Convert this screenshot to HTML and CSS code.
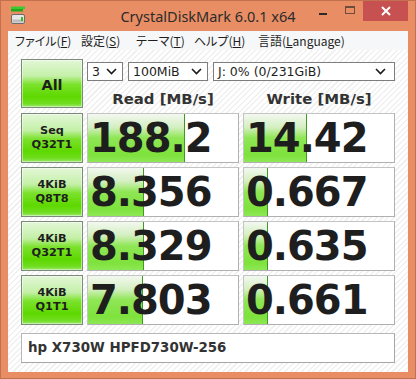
FILE: index.html
```html
<!DOCTYPE html>
<html lang="ja">
<head>
<meta charset="utf-8">
<title>CrystalDiskMark 6.0.1 x64</title>
<link rel="stylesheet" href="styles.css">
</head>
<body>
<div class="window">
  <div class="titlebar">
    <div class="tb-left">
      <svg class="appicon" width="16" height="18" viewBox="0 0 16 18">
        <rect x="1" y="0.5" width="14" height="2.5" fill="#3cc832"/>
        <rect x="1" y="3" width="12" height="2.5" fill="#22a81c"/>
        <rect x="1.5" y="8.5" width="13" height="9" rx="1.5" fill="#e6e6e6" stroke="#6c6c6c"/>
        <rect x="2.5" y="13.5" width="11" height="3" fill="#bdbdbd"/>
        <rect x="11" y="11" width="2" height="4" fill="#2fbf2a"/>
      </svg>
    </div>
    <div class="title">CrystalDiskMark 6.0.1 x64</div>
    <div class="controls">
      <span class="ctl"><span class="min-dash"></span></span>
      <span class="ctl"><span class="max-box"></span></span>
      <span class="ctl close">
        <svg width="10" height="10" viewBox="0 0 10 10"><path d="M1 1 L9 9 M9 1 L1 9" stroke="#fff" stroke-width="2"/></svg>
      </span>
    </div>
  </div>
  <div class="client">
    <div class="menubar">
      <span class="mi m1">ファイル(<u>F</u>)</span>
      <span class="mi m2">設定(<u>S</u>)</span>
      <span class="mi m3">テーマ(<u>T</u>)</span>
      <span class="mi m4">ヘルプ(<u>H</u>)</span>
      <span class="mi m5">言語(<u>L</u>anguage)</span>
    </div>
    <div class="content">
      <div class="top">
        <div class="gbtn all">All</div>
        <div class="topright">
          <div class="combos">
            <div class="combo c-count"><span>3</span><svg class="chev" width="11" height="7" viewBox="0 0 11 7"><path d="M1 1 L5.5 5.5 L10 1" fill="none" stroke="#1a1a1a" stroke-width="1.6"/></svg></div>
            <div class="combo c-size"><span>100MiB</span><svg class="chev" width="11" height="7" viewBox="0 0 11 7"><path d="M1 1 L5.5 5.5 L10 1" fill="none" stroke="#1a1a1a" stroke-width="1.6"/></svg></div>
            <div class="combo c-drive"><span>J: 0% (0/231GiB)</span><svg class="chev" width="11" height="7" viewBox="0 0 11 7"><path d="M1 1 L5.5 5.5 L10 1" fill="none" stroke="#1a1a1a" stroke-width="1.6"/></svg></div>
          </div>
          <div class="heads">
            <div class="head">Read [MB/s]</div>
            <div class="head">Write [MB/s]</div>
          </div>
        </div>
      </div>
      <div class="rows">
        <div class="row">
          <div class="gbtn label">Seq<br>Q32T1</div>
          <div class="val" style="--w:97px">188.2</div>
          <div class="val" style="--w:63px">14.42</div>
        </div>
        <div class="row">
          <div class="gbtn label">4KiB<br>Q8T8</div>
          <div class="val" style="--w:56px">8.356</div>
          <div class="val" style="--w:24px">0.667</div>
        </div>
        <div class="row">
          <div class="gbtn label">4KiB<br>Q32T1</div>
          <div class="val" style="--w:56px">8.329</div>
          <div class="val" style="--w:24px">0.635</div>
        </div>
        <div class="row">
          <div class="gbtn label">4KiB<br>Q1T1</div>
          <div class="val" style="--w:55px">7.803</div>
          <div class="val" style="--w:24px">0.661</div>
        </div>
      </div>
      <div class="comment">hp X730W HPFD730W-256</div>
    </div>
  </div>
</div>
</body>
</html>
```
FILE: styles.css
```css
html, body {
  margin: 0;
  padding: 0;
  background: #e98e64;
}

.window {
  width: 416px;
  height: 379px;
  box-sizing: border-box;
  border: 1px solid #c2714f;
  background: #e98e64;
  padding: 0 6px 6px 6px;
  display: flex;
  flex-direction: column;
}

.titlebar {
  height: 30px;
  display: grid;
  grid-template-columns: 1fr auto 1fr;
  align-items: start;
  margin: 0 1px;
}

.tb-left {
  padding: 5px 0 0 2px;
}

.appicon {
  display: block;
}

.title {
  font-family: "Noto Sans", "Open Sans", sans-serif;
  font-size: 14.5px;
  color: #2b2b2b;
  line-height: 20px;
  padding-top: 5px;
  white-space: nowrap;
}

.controls {
  display: flex;
  justify-content: flex-end;
  align-items: flex-start;
}

.ctl {
  width: 27px;
  height: 20px;
  display: flex;
  align-items: center;
  justify-content: center;
}

.min-dash {
  width: 8px;
  height: 2px;
  background: #2a2a2a;
  margin-top: 5px;
}

.max-box {
  width: 8px;
  height: 5px;
  border: 1px solid #6e4c3c;
  border-top-width: 2px;
  margin-top: -2px;
}

.close {
  width: 45px;
  background: #c75050;
}

.client {
  flex: 1;
  display: flex;
  flex-direction: column;
  margin: 0 1px;
  background: #ffffff;
}

.menubar {
  height: 19px;
  display: flex;
  align-items: center;
  background: #f6f7f8;
  font-family: "Noto Sans CJK JP", "Noto Sans", sans-serif;
  font-size: 12px;
  font-feature-settings: "palt";
  color: #1e1e1e;
  padding-left: 7px;
}

.mi {
  white-space: nowrap;
  line-height: 19px;
}

.mi u {
  text-underline-offset: 1px;
}

.m1 { width: 66px; }
.m2 { width: 55px; }
.m3 { width: 58px; }
.m4 { width: 64px; }

.content {
  flex: 1;
  padding: 9px 13px 8px 13px;
  background: repeating-linear-gradient(135deg, #ffffff 0px, #ffffff 2.5px, #f1f1f1 2.5px, #f1f1f1 4px);
  display: flex;
  flex-direction: column;
}

.top {
  display: flex;
  height: 49px;
  gap: 4px;
}

.gbtn {
  box-sizing: border-box;
  width: 62px;
  border: 1px solid #7b8a7b;
  background: linear-gradient(#e3f7d7 0%, #c4f0a8 34%, #7be22c 52%, #5ed800 78%, #6fdd1e 92%, #98e86a 100%);
  box-shadow: inset 0 0 0 1px rgba(255, 255, 255, 0.45);
  display: flex;
  align-items: center;
  justify-content: center;
  text-align: center;
  color: #1e1e1e;
  font-family: "DejaVu Sans", Verdana, sans-serif;
  font-weight: bold;
}

.all {
  height: 49px;
  font-size: 14.5px;
  padding-top: 2px;
}

.topright {
  width: 308px;
  display: flex;
  flex-direction: column;
}

.combos {
  margin-top: 3px;
  display: flex;
  gap: 5px;
  height: 19px;
}

.combo {
  box-sizing: border-box;
  height: 19px;
  border: 1px solid #7d7d7d;
  background: #ffffff;
  display: flex;
  align-items: center;
  justify-content: space-between;
  padding: 0 5px 0 4px;
  font-family: "DejaVu Sans", Verdana, sans-serif;
  font-size: 12.5px;
  color: #1e1e1e;
  white-space: nowrap;
}

.c-count { width: 36px; }
.c-size { width: 80px; }
.c-drive { width: 182px; padding-right: 8px; }

.chev {
  display: block;
  flex: none;
}

.heads {
  margin-top: 9px;
  display: grid;
  grid-template-columns: 152px 152px;
  column-gap: 4px;
}

.head {
  text-align: center;
  font-family: "DejaVu Sans", Verdana, sans-serif;
  font-weight: bold;
  font-size: 14.9px;
  line-height: 18px;
  color: #333333;
}

.rows {
  margin-top: 5px;
  display: flex;
  flex-direction: column;
  gap: 4px;
}

.row {
  display: flex;
  gap: 4px;
  height: 50px;
}

.label {
  height: 50px;
  font-size: 11.3px;
  line-height: 14px;
  font-weight: bold;
}

.val {
  box-sizing: border-box;
  width: 152px;
  height: 50px;
  border: 1px solid #c4c4c4;
  border-right-color: #b0b0b0;
  border-bottom-color: #b0b0b0;
  background-color: #ffffff;
  background-image:
    linear-gradient(#3e9a22, #3e9a22),
    linear-gradient(#f3f8f0 0%, #d3efc0 28%, #8fe655 50%, #7ee23c 85%, #8ee856 100%);
  background-repeat: no-repeat;
  background-size: 1px 100%, var(--w) 100%;
  background-position: calc(var(--w) - 1px) 0, 0 0;
  font-family: "DejaVu Sans", Verdana, sans-serif;
  font-weight: bold;
  font-size: 40px;
  letter-spacing: -1px;
  line-height: 48px;
  color: #1e1e1e;
  padding-left: 2px;
  white-space: nowrap;
}

.comment {
  margin-top: 8px;
  box-sizing: border-box;
  width: 374px;
  height: 30px;
  border: 1px solid #a6a6a6;
  border-top-color: #b8b8b8;
  border-left-color: #b8b8b8;
  background: #ffffff;
  font-family: "DejaVu Sans", Verdana, sans-serif;
  font-weight: bold;
  font-size: 13.4px;
  line-height: 28px;
  color: #333333;
  padding-left: 6px;
  white-space: nowrap;
}
```
